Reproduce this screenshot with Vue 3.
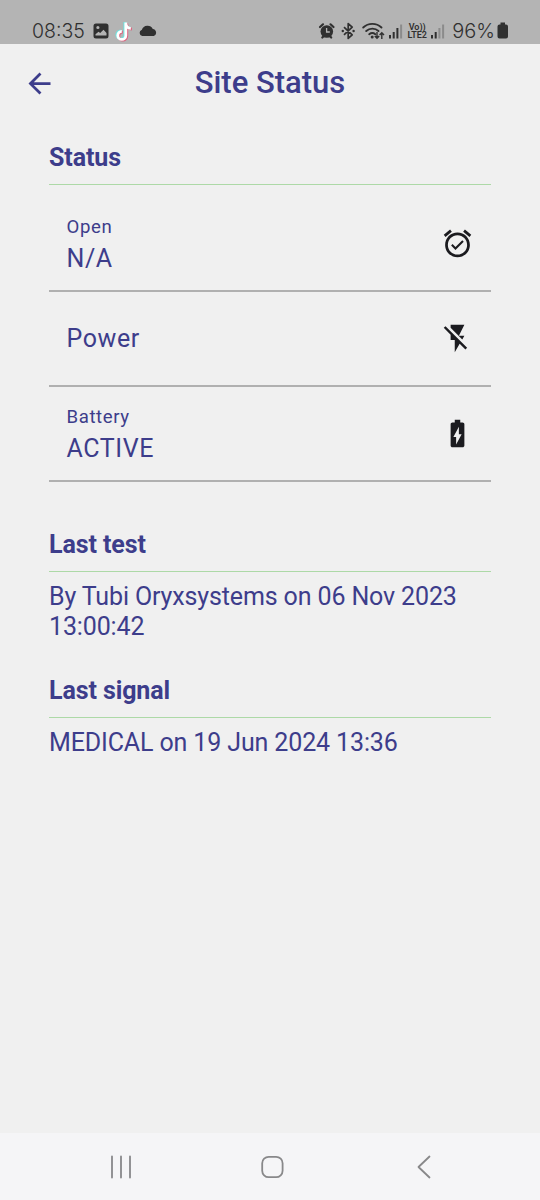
<template>
  <div class="screen">
    <header class="system-bar">
      <span class="clock">08:35</span>
      <svg class="system-left" width="66" height="22" viewBox="0 0 66 22">
        <path fill="#303030" fill-rule="evenodd" d="M4 3.5h10a2.5 2.5 0 0 1 2.5 2.5v10a2.5 2.5 0 0 1-2.5 2.5H4A2.5 2.5 0 0 1 1.5 16V6A2.5 2.5 0 0 1 4 3.5zM4.3 7.5a1.6 1.6 0 1 0 3.2 0a1.6 1.6 0 1 0-3.2 0zM3.500 15.500h11v-2.500l-3-3.300-3.300 3.300-1.700-1.200-3 2.500z" />
        <g fill="none" stroke-width="2.8">
          <path stroke="#6fe3e0" d="M32.800 2v12.800a4 4 0 1 1-4-4M32.800 3c.4 3 2.400 4.600 5.200 4.700" />
          <path stroke="#dc6580" d="M34.800 3.400v12.800a4 4 0 1 1-4-4M34.800 4.400c.4 3 2.400 4.600 5.200 4.700" />
          <path stroke="#fff" d="M33.800 2.600v12.800a4 4 0 1 1-4-4M33.800 3.600c.4 3 2.400 4.600 5 4.700" />
        </g>
        <path fill="#303030" d="M50.200 16a3.200 3.200 0 0 1-.3-6.200 6 6 0 0 1 10.900-.9 3.700 3.700 0 0 1 1 7.100z" />
      </svg>
      <div class="system-right">
        <svg width="86" height="22" viewBox="0 0 86 22">
          <!-- alarm -->
          <g fill="none" stroke="#303030" stroke-linecap="round">
            <path stroke-width="2.2" d="M2 7l3-2.700M12.500 4.300l3 2.700M4.300 17.500l1-1M13.200 17.500l-1-1" />
          </g>
          <circle cx="8.8" cy="11.5" r="6.3" fill="#303030" />
          <path fill="none" stroke="#b4b4b4" stroke-width="1.3" d="M8.600 8v4h3.200" />
          <!-- bluetooth -->
          <path fill="none" stroke="#303030" stroke-width="1.7" stroke-linejoin="round" d="M26 7.200l8.200 7.600-4 3.600V3.600l4 3.600L26 14.800" />
          <circle cx="24.8" cy="11" r="1.2" fill="#303030" />
          <circle cx="35.6" cy="11" r="1.2" fill="#303030" />
          <!-- wifi -->
          <g fill="none" stroke="#303030" stroke-width="1.9" stroke-linecap="round">
            <path d="M45.200 7.500c5-4.800 13.300-4.800 18.300 0M48.200 11c3.500-3.200 8.900-3.200 12.300 0M51.200 14.200c1.900-1.500 4.300-1.500 6.100 0" />
          </g>
          <circle cx="54.2" cy="17" r="1.5" fill="#303030" />
          <path fill="none" stroke="#303030" stroke-width="1.4" d="M59 12v6M56.800 16l2.200 2.300 2.200-2.300M63.800 19v-6M61.600 15l2.200-2.300L66 15" />
          <!-- signal -->
          <g fill="#303030">
            <rect x="71" y="15" width="2" height="3.5" />
            <rect x="74.7" y="12" width="2" height="6.5" />
            <rect x="78.4" y="8" width="2" height="10.5" />
            <rect x="82.1" y="4.5" width="2" height="14" opacity=".3" />
          </g>
        </svg>
        <div class="volte">
          <span>Vo))</span>
          <span>LTE2</span>
        </div>
        <svg width="16" height="22" viewBox="0 0 16 22">
          <g fill="#303030">
            <rect x="1" y="15" width="2" height="3.5" />
            <rect x="4.7" y="12" width="2" height="6.5" />
            <rect x="8.4" y="8" width="2" height="10.5" opacity=".3" />
            <rect x="12.1" y="4.5" width="2" height="14" opacity=".3" />
          </g>
        </svg>
        <span class="percent">96%</span>
        <svg width="12" height="22" viewBox="0 0 12 22">
          <path fill="#303030" d="M3.500 2.500h4.500v2h1a2 2 0 0 1 2 2v10a2 2 0 0 1-2 2H2.500a2 2 0 0 1-2-2v-10a2 2 0 0 1 2-2h1z" />
        </svg>
      </div>
    </header>

    <div class="app-bar">
      <button class="back-button" aria-label="Back">
        <svg width="33" height="33" viewBox="0 0 24 24">
          <path fill="currentColor" d="M20 11H7.830l5.590-5.590L12 4l-8 8 8 8 1.410-1.410L7.830 13H20v-2z" />
        </svg>
      </button>
      <h1>Site Status</h1>
    </div>

    <main class="content">
      <h2>Status</h2>
      <ul class="status-list">
        <li v-for="item in items" :key="item.label" class="status-row">
          <div class="status-text">
            <span v-if="item.value" class="status-label">{{ item.label }}</span>
            <span class="status-value">{{ item.value || item.label }}</span>
          </div>
          <svg width="33" height="33" viewBox="0 0 24 24">
            <path fill="#1b1b1f" :d="item.icon" />
          </svg>
        </li>
      </ul>

      <section v-for="entry in history" :key="entry.title" class="history">
        <h2>{{ entry.title }}</h2>
        <p>{{ entry.text }}</p>
      </section>
    </main>

    <nav class="nav-bar">
      <svg width="24" height="24" viewBox="0 0 24 24">
        <path d="M3 1.500v21M12 1.500v21M21 1.500v21" />
      </svg>
      <svg width="24" height="24" viewBox="0 0 24 24">
        <rect x="1.2" y="1.8" width="20.4" height="20.4" rx="6.5" />
      </svg>
      <svg width="24" height="24" viewBox="0 0 24 24">
        <path d="M17.500 1.500L6.500 12l11 10.500" />
      </svg>
    </nav>
  </div>
</template>

<script setup>
const items = [
  {
    label: 'Open',
    value: 'N/A',
    icon: 'M22 5.72l-4.6-3.86-1.29 1.53 4.6 3.86L22 5.72zM7.88 3.39L6.6 1.86 2 5.71l1.29 1.53 4.59-3.85zM12 4c-4.97 0-9 4.03-9 9s4.02 9 9 9c4.97 0 9-4.03 9-9s-4.03-9-9-9zm0 16c-3.87 0-7-3.13-7-7s3.13-7 7-7 7 3.13 7 7-3.13 7-7 7zM10.54 14.53L8.41 12.4l-1.06 1.06 3.18 3.18 6-6-1.06-1.06-4.93 4.95z'
  },
  {
    label: 'Power',
    value: '',
    icon: 'M3.27 3L2 4.27l5 5V13h3v9l3.58-6.14L17.73 20 19 18.73 3.27 3zM17 10h-4l4-8H7v2.18l8.46 8.46L17 10z'
  },
  {
    label: 'Battery',
    value: 'ACTIVE',
    icon: 'M15.67 4H14V2h-4v2H8.33C7.6 4 7 4.6 7 5.33v15.33C7 21.4 7.6 22 8.33 22h7.33c.74 0 1.34-.6 1.34-1.33V5.33C17 4.6 16.4 4 15.67 4zM11 20v-5.5H9L13 7v5.5h2L11 20z'
  }
]

const history = [
  { title: 'Last test', text: 'By Tubi Oryxsystems on 06 Nov 2023 13:00:42' },
  { title: 'Last signal', text: 'MEDICAL on 19 Jun 2024 13:36' }
]
</script>

<style>
body {
  margin: 0;
  background: #f0f0f0;
}
</style>

<style scoped>
.screen {
  display: flex;
  flex-direction: column;
  height: 1200px;
  background: #f0f0f0;
  color: #3d3d8b;
  font-family: Roboto, sans-serif;
}

.system-bar {
  display: flex;
  align-items: center;
  height: 44px;
  box-sizing: border-box;
  padding: 17px 31px 0 32px;
  background: #b4b4b4;
  color: #303030;
}

.clock,
.percent {
  font-family: Inter, sans-serif;
  font-size: 19.5px;
  line-height: 26px;
  font-weight: 300;
}

.system-left {
  margin-left: 7px;
}

.system-right {
  display: flex;
  align-items: center;
  margin-left: auto;
}

.volte {
  display: flex;
  flex-direction: column;
  align-items: center;
  width: 22px;
  margin: 0 2px;
  font-size: 9px;
  line-height: 8px;
  font-weight: 600;
}

.percent {
  margin: 0 2px 0 6px;
  font-size: 20px;
}

.app-bar {
  display: grid;
  grid-template-columns: 55px 1fr 55px;
  align-items: center;
  height: 77px;
  padding: 0 23px;
}

.back-button {
  display: flex;
  padding: 2px 0 0;
  border: 0;
  background: none;
  color: inherit;
}

h1 {
  margin: 0;
  font-size: 31px;
  line-height: 36px;
  font-weight: 500;
  text-align: center;
}

.content {
  flex: 1;
  padding: 22px 49px 0;
}

h2 {
  margin: 0;
  padding-bottom: 12px;
  border-bottom: 1px solid #add9a7;
  font-size: 25px;
  line-height: 29px;
  font-weight: 700;
  letter-spacing: -0.1px;
}

.status-list {
  margin: 12px 0 48px;
  padding: 0;
  list-style: none;
}

.status-row {
  display: flex;
  align-items: center;
  justify-content: space-between;
  height: 95px;
  box-sizing: border-box;
  padding: 0 17.5px;
  border-bottom: 2px solid #b0b0b0;
}

.status-text {
  display: flex;
  flex-direction: column;
  letter-spacing: 0.6px;
}

.status-label {
  padding: 2px 0 6px;
  font-size: 18.6px;
  line-height: 22px;
}

.status-value {
  font-size: 25px;
  line-height: 30px;
}

.history {
  margin-bottom: 34px;
}

.history p {
  margin: 10px 0 0;
  font-size: 25px;
  line-height: 30px;
  letter-spacing: -0.13px;
}

.nav-bar {
  display: flex;
  align-items: center;
  justify-content: space-between;
  height: 67px;
  padding: 0 104px 0 109px;
  background: #f5f5f7;
}

.nav-bar svg {
  fill: none;
  stroke: #88888a;
  stroke-width: 1.8;
  stroke-linecap: round;
  stroke-linejoin: round;
}
</style>
